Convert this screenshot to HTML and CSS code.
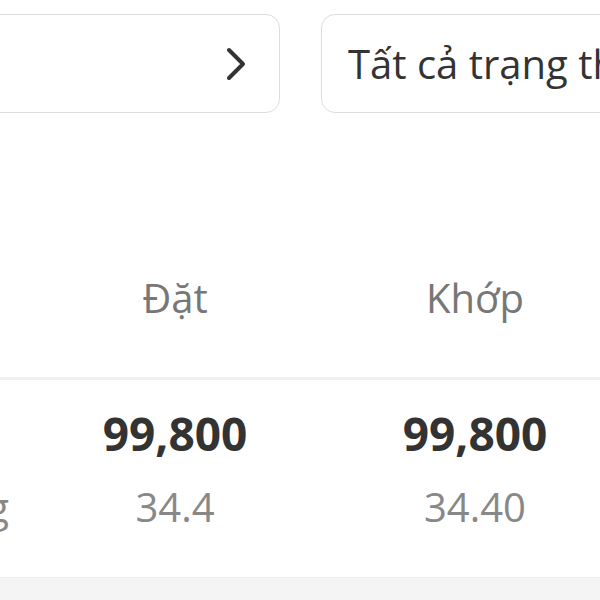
FILE: index.html
```html
<!DOCTYPE html>
<html lang="vi">
<head>
<meta charset="utf-8">
<link rel="stylesheet" href="styles.css">
</head>
<body>
<div class="page">
  <div class="filters">
    <div class="card card-date">
      <span class="card-text"></span>
      <svg class="chev" width="20" height="34" viewBox="0 0 20 34"><path d="M3 3 L17 17 L3 31" fill="none" stroke="#333" stroke-width="4" stroke-linecap="round" stroke-linejoin="round"/></svg>
    </div>
    <div class="card card-status">
      <span class="card-text">Tất cả trạng thái</span>
    </div>
  </div>

  <div class="table">
    <div class="row head">
      <div class="cell label"></div>
      <div class="cell">Đặt</div>
      <div class="cell">Khớp</div>
    </div>
    <div class="row body">
      <div class="cell label">
        <div class="v-main">&nbsp;</div>
        <div class="v-sub">Khối lượng</div>
      </div>
      <div class="cell">
        <div class="v-main">99,800</div>
        <div class="v-sub">34.4</div>
      </div>
      <div class="cell">
        <div class="v-main">99,800</div>
        <div class="v-sub">34.40</div>
      </div>
    </div>
    <div class="band"></div>
  </div>
</div>
</body>
</html>
```

FILE: styles.css
```css
html, body {
  margin: 0;
  padding: 0;
  background: #fff;
}
body {
  font-family: "Open Sans", "Noto Sans", sans-serif;
  color: #333;
  width: 600px;
  height: 600px;
  overflow: hidden;
}
.page {
  width: 600px;
  overflow: hidden;
}
.filters {
  display: flex;
  gap: 41px;
  padding-top: 14px;
  margin-left: -40px;
}
.card {
  flex: none;
  box-sizing: border-box;
  height: 99px;
  border: 1.5px solid #ddd;
  border-radius: 14px;
  display: flex;
  align-items: center;
  background: #fff;
}
.card-date {
  width: 320px;
  justify-content: flex-end;
  padding-right: 33px;
}
.card-status {
  width: 420px;
  padding-left: 26px;
}
.card-text {
  font-size: 40px;
  line-height: 56px;
  color: #333;
  white-space: nowrap;
}
.chev {
  display: block;
}
.row {
  display: grid;
  grid-template-columns: repeat(3, 300px);
  margin-left: -275px;
}
.cell {
  text-align: center;
  white-space: nowrap;
}
.cell.label {
  text-align: right;
  padding-right: 16px;
}
.head {
  padding-top: 157px;
  padding-bottom: 51px;
  font-size: 40px;
  line-height: 56px;
  color: #777;
  border-bottom: 3px solid #f0f0f0;
}
.body {
  padding-top: 25px;
}
.v-main {
  font-size: 46px;
  font-weight: 700;
  line-height: 56px;
  color: #333;
}
.v-sub {
  margin-top: 18px;
  font-size: 40px;
  line-height: 56px;
  color: #888;
}
.band {
  margin-top: 42px;
  height: 30px;
  background: #f4f4f4;
  border-top: 1px solid #eee;
}
```
